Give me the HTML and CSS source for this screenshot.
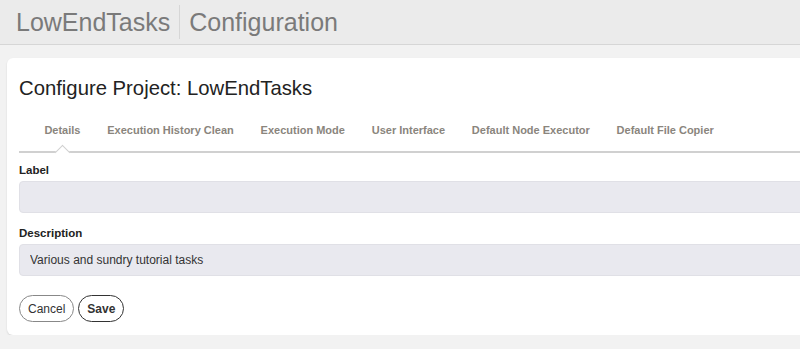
FILE: index.html
```html
<!DOCTYPE html>
<html lang="en">
  <head>
    <meta charset="UTF-8" />
    <meta name="viewport" content="width=device-width, initial-scale=1.0" />
    <title>LowEndTasks - Configuration</title>
    <link rel="stylesheet" href="styles.css">
  </head>

  <body>
    <header class="top-bar">
      <span class="project-name">LowEndTasks</span>
      <span class="page-name">Configuration</span>
    </header>

    <main class="card">
      <h1 class="card-title">Configure Project: LowEndTasks</h1>

      <nav class="tabs">
        <a class="tab active" href="#">Details</a>
        <a class="tab" href="#">Execution History Clean</a>
        <a class="tab" href="#">Execution Mode</a>
        <a class="tab" href="#">User Interface</a>
        <a class="tab" href="#">Default Node Executor</a>
        <a class="tab" href="#">Default File Copier</a>
      </nav>

      <form class="details-form">
        <label class="field-label" for="label">Label</label>
        <input class="field-input" id="label" type="text" value="" />

        <label class="field-label" for="description">Description</label>
        <input
          class="field-input"
          id="description"
          type="text"
          value="Various and sundry tutorial tasks"
        />

        <div class="actions">
          <button type="button" class="btn">Cancel</button>
          <button type="submit" class="btn btn-primary">Save</button>
        </div>
      </form>
    </main>
  </body>
</html>
```

FILE: styles.css
```css
*,
*::before,
*::after {
  box-sizing: border-box;
}
:root {
  --bg: #f2f2f2;
  --surface: #ffffff;
  --text: #222222;
  --muted: #7a7a7a;
  --tab: #8a857d;
  --line: #d0d0d0;
  --field: #e9e9ef;
}
body {
  margin: 0;
  font-family: "Liberation Sans", Arial, sans-serif;
  background: var(--bg);
  color: var(--text);
  overflow: hidden;
}
.top-bar {
  display: flex;
  align-items: center;
  height: 45px;
  padding: 0 16px;
  background: #ebebeb;
  border-bottom: 1px solid #d6d6d6;
  font-size: 25px;
  color: var(--muted);
}
.project-name {
  padding-right: 9px;
  border-right: 1px solid #d6d6d6;
  line-height: 34px;
}
.page-name {
  padding-left: 9px;
}
.card {
  margin: 13px -40px 0 7px;
  padding: 16px 0 13px 12px;
  background: var(--surface);
  border-radius: 6px;
  box-shadow: 0 1px 2px rgba(0, 0, 0, 0.12);
}
.card-title {
  margin: 0;
  font-size: 20.3px;
  font-weight: 400;
  line-height: 28px;
}
.tabs {
  position: relative;
  display: flex;
  margin-top: 17px;
  padding-left: 12px;
  border-bottom: 2px solid var(--line);
}
.tab {
  position: relative;
  padding: 5px 13.4px 15px;
  font-size: 11px;
  font-weight: 700;
  color: var(--tab);
  text-decoration: none;
  white-space: nowrap;
}
.tab.active::after {
  content: "";
  position: absolute;
  left: 50%;
  bottom: -7px;
  width: 11px;
  height: 11px;
  margin-left: -5px;
  background: var(--surface);
  border-top: 1px solid var(--line);
  border-left: 1px solid var(--line);
  transform: rotate(45deg);
}
.details-form {
  display: flex;
  flex-direction: column;
  padding-top: 11px;
}
.field-label {
  font-size: 11.5px;
  font-weight: 700;
  margin-bottom: 5px;
}
.field-input {
  height: 32px;
  margin-bottom: 14px;
  padding: 0 10px;
  background: var(--field);
  border: 1px solid #e0e0e6;
  border-radius: 4px;
  font-family: inherit;
  font-size: 12px;
  color: #333;
}
.actions {
  display: flex;
  gap: 4px;
  margin-top: 5px;
}
.btn {
  height: 27px;
  padding: 0 8px;
  background: var(--surface);
  border: 1px solid #888;
  border-radius: 14px;
  font-family: inherit;
  font-size: 12px;
  color: #333;
}
.btn-primary {
  border: 1.5px solid #333;
  font-weight: 700;
}
```
